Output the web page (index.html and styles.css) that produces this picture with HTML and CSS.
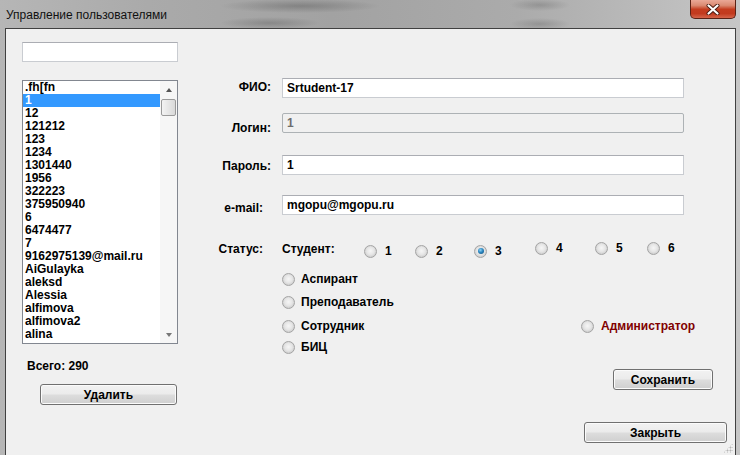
FILE: index.html
```html
<!DOCTYPE html>
<html lang="ru">
<head>
<meta charset="utf-8">
<title>Управление пользователями</title>
<link rel="stylesheet" href="styles.css">
</head>
<body>
<div class="window">
  <div class="titlebar">
    <span class="title">Управление пользователями</span>
    <div class="close">
      <svg width="14" height="11" viewBox="0 0 14 11">
        <path d="M2.5 1.5 L11.5 9.5 M11.5 1.5 L2.5 9.5" stroke="#4a1a10" stroke-width="4" stroke-linecap="round"/>
        <path d="M2.5 1.5 L11.5 9.5 M11.5 1.5 L2.5 9.5" stroke="#ffffff" stroke-width="2.2" stroke-linecap="round"/>
      </svg>
    </div>
  </div>
  <div class="client">
    <div class="leftcol">
      <input class="textbox search" type="text" value="">
      <div class="listbox">
        <ul class="items">
          <li>.fh[fn</li>
          <li class="sel">1</li>
          <li>12</li>
          <li>121212</li>
          <li>123</li>
          <li>1234</li>
          <li>1301440</li>
          <li>1956</li>
          <li>322223</li>
          <li>375950940</li>
          <li>6</li>
          <li>6474477</li>
          <li>7</li>
          <li>9162975139@mail.ru</li>
          <li>AiGulayka</li>
          <li>aleksd</li>
          <li>Alessia</li>
          <li>alfimova</li>
          <li>alfimova2</li>
          <li>alina</li>
        </ul>
        <div class="vscroll">
          <div class="sb-arrow"><span class="tri-up"></span></div>
          <div class="sb-thumb"></div>
          <div class="sb-track"></div>
          <div class="sb-arrow"><span class="tri-down"></span></div>
        </div>
      </div>
      <div class="total">Всего: 290</div>
      <button class="btn btn-delete">Удалить</button>
    </div>

    <div class="rightcol">
      <div class="field">
        <label class="flabel l-fio">ФИО:</label>
        <input class="textbox wide" type="text" value="Srtudent-17">
      </div>
      <div class="field f-login">
        <label class="flabel l-login">Логин:</label>
        <input class="textbox wide disabled" type="text" value="1" readonly>
      </div>
      <div class="field f-pass">
        <label class="flabel l-pass">Пароль:</label>
        <input class="textbox wide" type="text" value="1">
      </div>
      <div class="field f-mail">
        <label class="flabel l-mail">e-mail:</label>
        <input class="textbox wide" type="text" value="mgopu@mgopu.ru">
      </div>

      <div class="status-row">
        <span class="flabel l-status">Статус:</span>
        <span class="student">Студент:</span>
        <div class="nums">
          <div class="radio num"><span class="dot"></span><span>1</span></div>
          <div class="radio num"><span class="dot"></span><span>2</span></div>
          <div class="radio num"><span class="dot on"></span><span>3</span></div>
          <div class="radio num up"><span class="dot"></span><span>4</span></div>
          <div class="radio num up"><span class="dot"></span><span>5</span></div>
          <div class="radio num up"><span class="dot"></span><span>6</span></div>
        </div>
      </div>

      <div class="options">
        <div class="radio opt o-asp"><span class="dot"></span><span>Аспирант</span></div>
        <div class="radio opt o-prep"><span class="dot"></span><span>Преподаватель</span></div>
        <div class="opt-pair o-sotr">
          <div class="radio opt"><span class="dot"></span><span>Сотрудник</span></div>
          <div class="radio opt admin"><span class="dot"></span><span>Администратор</span></div>
        </div>
        <div class="radio opt o-bic"><span class="dot"></span><span>БИЦ</span></div>
      </div>

      <button class="btn btn-save">Сохранить</button>
      <button class="btn btn-close">Закрыть</button>
    </div>
    <div class="grip"></div>
  </div>
</div>
</body>
</html>
```

FILE: styles.css
```css
html, body {
  margin: 0;
  padding: 0;
}
body {
  width: 740px;
  height: 455px;
  overflow: hidden;
  font-family: "Liberation Sans", Arial, sans-serif;
}
.window {
  width: 740px;
  height: 455px;
  display: flex;
  flex-direction: column;
  background:
    radial-gradient(ellipse 80px 7px at 300px 6px, rgba(70,70,70,.35), rgba(70,70,70,0)),
    radial-gradient(ellipse 50px 6px at 270px 23px, rgba(70,70,70,.3), rgba(70,70,70,0)),
    radial-gradient(ellipse 30px 6px at 540px 5px, rgba(70,70,70,.25), rgba(70,70,70,0)),
    radial-gradient(ellipse 30px 6px at 540px 24px, rgba(70,70,70,.25), rgba(70,70,70,0)),
    linear-gradient(to right, #b6b6b6 0, #aaaaaa 20%, #a2a2a2 45%, #ababab 70%, #bdbdbd 90%, #c6c6c6 100%);
}
.titlebar {
  height: 28px;
  flex: none;
  display: flex;
  align-items: flex-start;
}
.title {
  font-size: 12px;
  line-height: 16px;
  color: #111;
  padding: 7px 0 0 6px;
}
.close {
  margin-left: auto;
  margin-right: 4px;
  width: 46px;
  height: 19px;
  box-sizing: border-box;
  border: 1px solid #5a2216;
  border-top: none;
  border-radius: 0 0 5px 5px;
  background: linear-gradient(#eaa897 0, #db8a72 30%, #c43c1f 52%, #c23a1e 75%, #d5644a 100%);
  display: flex;
  align-items: center;
  justify-content: center;
}
.client {
  flex: 1;
  margin: 0 4px 0 5px;
  border: 1px solid #404040;
  border-bottom: none;
  background: #f0f0f0;
  display: flex;
  position: relative;
}

/* ---- common controls ---- */
.textbox {
  box-sizing: border-box;
  height: 20px;
  margin: 0;
  padding: 0 3px 0 4px;
  border: 1px solid #c9ccd1;
  border-top-color: #abadb3;
  background: #fff;
  font: bold 12px "Liberation Sans", Arial, sans-serif;
  color: #000;
  outline: none;
}
.textbox.disabled {
  background: #f0f0f0;
  border-color: #adb2b5;
  border-radius: 2px;
  color: #6d6d6d;
}
.btn {
  box-sizing: border-box;
  height: 21px;
  padding: 0;
  border: 1px solid #707070;
  border-radius: 3px;
  background: linear-gradient(#f2f2f2 0, #ebebeb 48%, #dddddd 52%, #cfcfcf 100%);
  box-shadow: inset 0 0 0 1px #fbfbfb;
  font: bold 12px "Liberation Sans", Arial, sans-serif;
  color: #000;
}

/* ---- left column ---- */
.leftcol {
  flex: none;
  width: 194px;
  box-sizing: border-box;
  padding: 13px 0 0 16px;
  display: flex;
  flex-direction: column;
  align-items: flex-start;
}
.search {
  width: 156px;
}
.listbox {
  margin-top: 18px;
  width: 156px;
  height: 264px;
  box-sizing: border-box;
  border: 1px solid #828790;
  background: #fff;
  display: flex;
}
.items {
  flex: 1;
  list-style: none;
  margin: 0;
  padding: 0;
  overflow: hidden;
  font: bold 12px "Liberation Sans", Arial, sans-serif;
  line-height: 13px;
  color: #000;
}
.items li {
  height: 13px;
  padding-left: 2px;
  white-space: nowrap;
}
.items li.sel {
  background: #3399ff;
  color: #fff;
}
.vscroll {
  flex: none;
  width: 17px;
  display: flex;
  flex-direction: column;
  background: #f6f6f6;
}
.sb-arrow {
  height: 17px;
  display: flex;
  align-items: center;
  justify-content: center;
}
.tri-up {
  width: 0;
  height: 0;
  border-left: 3.5px solid transparent;
  border-right: 3.5px solid transparent;
  border-bottom: 4px solid #555;
}
.tri-down {
  width: 0;
  height: 0;
  border-left: 3.5px solid transparent;
  border-right: 3.5px solid transparent;
  border-top: 4px solid #777;
}
.sb-thumb {
  margin: 1px 1px 0 1px;
  height: 17px;
  box-sizing: border-box;
  border: 1px solid #9a9a9a;
  border-radius: 2px;
  background: linear-gradient(to right, #f3f3f3, #e6e6e6 50%, #d9d9d9);
}
.sb-track {
  flex: 1;
}
.total {
  margin: 15px 0 0 5px;
  font: bold 12px "Liberation Sans", Arial, sans-serif;
  line-height: 14px;
  color: #000;
}
.btn-delete {
  width: 137px;
  margin: 11px 0 0 18px;
}

/* ---- right column ---- */
.rightcol {
  flex: 1;
  display: flex;
  flex-direction: column;
  padding-top: 49px;
}
.field {
  display: flex;
  align-items: flex-start;
  height: 20px;
}
.f-login { margin-top: 15px; }
.f-pass { margin-top: 22px; }
.f-mail { margin-top: 20px; }
.flabel {
  flex: none;
  width: 71px;
  box-sizing: border-box;
  text-align: right;
  font: bold 12px "Liberation Sans", Arial, sans-serif;
  line-height: 14px;
  color: #000;
}
.l-fio { padding-top: 2px; }
.l-login { padding-top: 8px; }
.l-pass { padding-top: 4px; }
.l-mail { padding-top: 6px; padding-right: 8px; }
.wide {
  width: 402px;
  margin-left: 11px;
}

.status-row {
  margin-top: 26px;
  display: flex;
  align-items: flex-start;
  height: 16px;
}
.l-status {
  line-height: 16px;
  padding-right: 8px;
}
.student {
  flex: none;
  width: 82px;
  margin-left: 11px;
  font: bold 12px "Liberation Sans", Arial, sans-serif;
  line-height: 16px;
}
.nums {
  display: grid;
  grid-template-columns: 51px 59px 61px 60px 52px auto;
  padding-top: 2px;
}
.radio {
  display: flex;
  align-items: center;
  height: 16px;
  font: bold 12px "Liberation Sans", Arial, sans-serif;
  color: #000;
  white-space: nowrap;
}
.radio .dot {
  flex: none;
  width: 13px;
  height: 13px;
  box-sizing: border-box;
  border-radius: 50%;
  border: 1px solid #a4a4a4;
  background: radial-gradient(circle at 50% 45%, #f6f6f6 0, #e6e6e6 45%, #cfcfcf 75%, #dedede 100%);
  margin-right: 6px;
  position: relative;
}
.radio .dot.on::after {
  content: "";
  position: absolute;
  left: 2.5px;
  top: 2.5px;
  width: 6px;
  height: 6px;
  border-radius: 50%;
  background: radial-gradient(circle at 40% 35%, #8fd3f5 0, #2a86c0 45%, #124a73 100%);
}
.radio.num .dot { margin-right: 8px; }
.radio.up { margin-top: -3px; }

.options {
  margin-left: 82px;
  margin-top: 14px;
  display: flex;
  flex-direction: column;
  align-items: flex-start;
}
.o-prep { margin-top: 7px; }
.o-sotr { margin-top: 8px; }
.o-bic { margin-top: 5px; }
.opt-pair {
  display: grid;
  grid-template-columns: 299px auto;
}
.radio.admin { color: #800000; }
.radio.admin .dot { margin-right: 7px; }

.btn-save {
  align-self: flex-end;
  width: 100px;
  margin: 14px 22px 0 0;
}
.btn-close {
  align-self: flex-end;
  width: 143px;
  margin: 32px 8px 0 0;
}
.grip {
  position: absolute;
  right: 2px;
  bottom: 2px;
  width: 10px;
  height: 10px;
  background:
    radial-gradient(circle, #b5b5b5 0.8px, transparent 1.2px) 0 0 / 3px 3px;
  clip-path: polygon(100% 0, 100% 100%, 0 100%);
}
```
